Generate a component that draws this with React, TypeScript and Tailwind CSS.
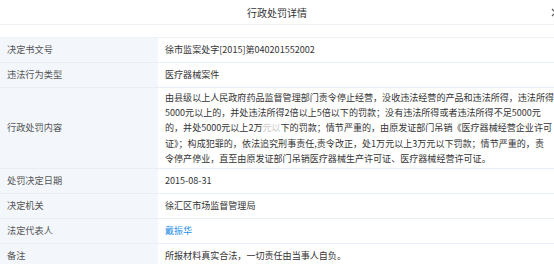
import React from "react";

const font = { fontFamily: '"Noto Sans CJK SC", "Microsoft YaHei", sans-serif' };

function Row({ label, children, tall }: { label: string; children: React.ReactNode; tall?: boolean }) {
  return (
    <div className="flex border-b border-[#e8eef5]">
      <div className="w-[158px] shrink-0 bg-[#f3f7fc] flex items-center pl-[7px] text-[#555] text-[9.2px]">
        {label}
      </div>
      <div
        className={
          "flex-1 pl-[7px] text-[#333] text-[9.05px] " +
          (tall ? "py-[2px] leading-[15.2px]" : "h-[24px] flex items-center")
        }
      >
        {children}
      </div>
    </div>
  );
}

export default function App() {
  return (
    <div className="w-[554px] h-[264px] overflow-hidden bg-white relative" style={font}>
      <div className="h-[25px] border-b border-[#edf1f5] flex items-center justify-center text-[10px] text-[#333]">
        行政处罚详情
      </div>
      <svg className="absolute left-[551px] top-[8px]" width="9" height="9" viewBox="0 0 9 9">
        <path d="M1 1L8 8M8 1L1 8" stroke="#555" strokeWidth="1.2" />
      </svg>
      <div className="mt-[12px] border-t border-[#eef3f8]">
        <Row label="决定书文号">徐市监案处字[2015]第040201552002</Row>
        <Row label="违法行为类型">医疗器械案件</Row>
        <Row label="行政处罚内容" tall>
          <div className="whitespace-nowrap">
            由县级以上人民政府药品监督管理部门责令停止经营，没收违法经营的产品和违法所得，违法所得
            <br />
            5000元以上的，并处违法所得2倍以上5倍以下的罚款；没有违法所得或者违法所得不足5000元
            <br />
            的，并处5000元以上2万<span className="text-[#c8c8c8]">元以</span>下的罚款；情节严重的，由原发证部门吊销《医疗器械经营企业许可
            <br />
            证》；构成犯罪的，依法追究刑事责任,责令改正，处1万元以上3万元以下罚款；情节严重的，责
            <br />
            令停产停业，直至由原发证部门吊销医疗器械生产许可证、医疗器械经营许可证。
          </div>
        </Row>
        <Row label="处罚决定日期">2015-08-31</Row>
        <Row label="决定机关">徐汇区市场监督管理局</Row>
        <Row label="法定代表人">
          <span className="text-[#1e8ee8]">戴振华</span>
        </Row>
        <Row label="备注">所报材料真实合法，一切责任由当事人自负。</Row>
      </div>
    </div>
  );
}
